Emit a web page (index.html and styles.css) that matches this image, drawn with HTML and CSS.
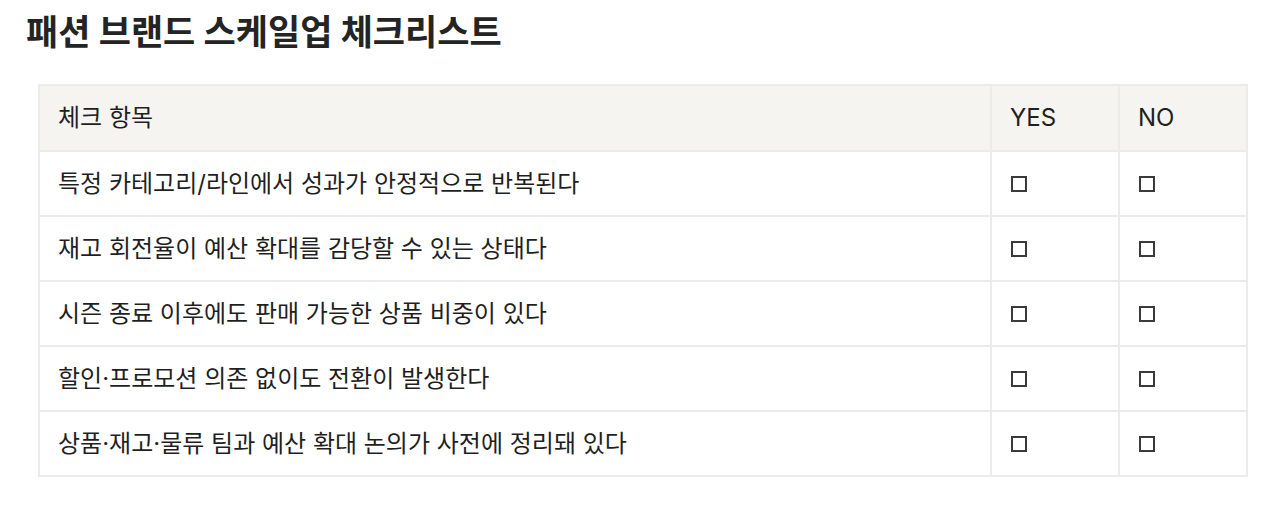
FILE: index.html
```html
<!DOCTYPE html>
<html lang="ko">
<head>
<meta charset="utf-8">
<link rel="stylesheet" href="styles.css">
</head>
<body>
<main class="page">
  <h1 class="title">패션 브랜드 스케일업 체크리스트</h1>
  <table class="checklist">
    <thead>
      <tr>
        <th class="col-item">체크 항목</th>
        <th class="col-yes">YES</th>
        <th class="col-no">NO</th>
      </tr>
    </thead>
    <tbody>
      <tr><td>특정 카테고리/라인에서 성과가 안정적으로 반복된다</td><td><span class="box"></span></td><td><span class="box"></span></td></tr>
      <tr><td>재고 회전율이 예산 확대를 감당할 수 있는 상태다</td><td><span class="box"></span></td><td><span class="box"></span></td></tr>
      <tr><td>시즌 종료 이후에도 판매 가능한 상품 비중이 있다</td><td><span class="box"></span></td><td><span class="box"></span></td></tr>
      <tr><td>할인·프로모션 의존 없이도 전환이 발생한다</td><td><span class="box"></span></td><td><span class="box"></span></td></tr>
      <tr><td>상품·재고·물류 팀과 예산 확대 논의가 사전에 정리돼 있다</td><td><span class="box"></span></td><td><span class="box"></span></td></tr>
    </tbody>
  </table>
</main>
</body>
</html>
```
FILE: styles.css
```css
html, body {
  margin: 0;
  padding: 0;
  background: #ffffff;
}
body {
  font-family: "Inter", "Noto Sans CJK KR", "Noto Sans", sans-serif;
  color: #1f1f1f;
}
.page {
  padding: 9px 32px 0 26px;
}
.title {
  margin: 0 0 29px 0;
  font-size: 35px;
  font-weight: 700;
  line-height: 46px;
  color: #242424;
  letter-spacing: 0;
}
.checklist {
  margin-left: 12px;
  width: 1210px;
  border-collapse: collapse;
  font-size: 24px;
}
.checklist th,
.checklist td {
  border: 2px solid #ebebeb;
  height: 63px;
  padding: 0 18px;
  text-align: left;
  vertical-align: middle;
  font-weight: 400;
  line-height: 30px;
}
.checklist thead th {
  background: #f5f4f1;
  height: 64px;
}
.col-yes, .col-no {
  width: 90px;
}
.checklist td .box {
  display: block;
  width: 12px;
  height: 12px;
  margin-left: 1px;
  border: 2px solid #3a3a3a;
  box-sizing: content-box;
}
```
